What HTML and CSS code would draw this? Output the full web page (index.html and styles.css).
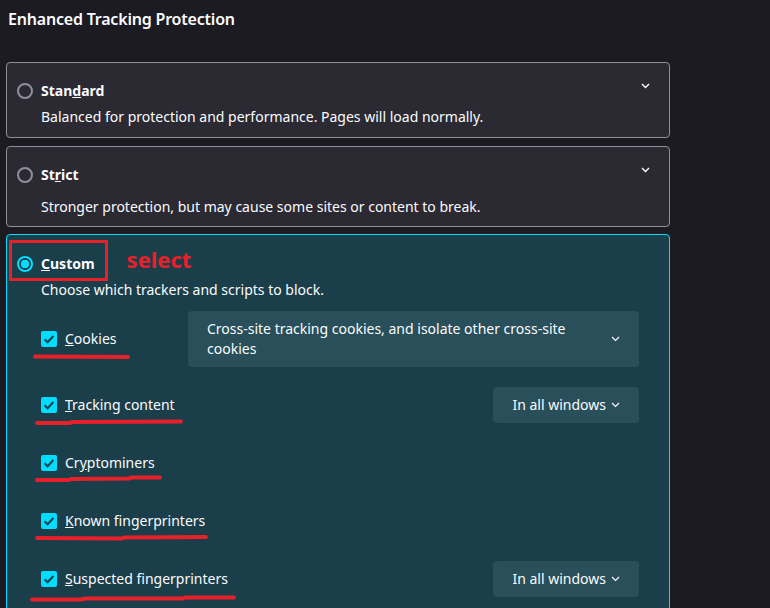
FILE: index.html
```html
<!DOCTYPE html>
<html>
<head>
<meta charset="utf-8">
<link rel="stylesheet" href="styles.css">
</head>
<body>
<h1 class="title">Enhanced Tracking Protection</h1>
<div class="options">
  <section class="card">
    <div class="head">
      <span class="radio"></span>
      <span class="label">Stan<u>d</u>ard</span>
      <svg class="chev" width="9" height="6" viewBox="0 0 9 6"><path d="M1 1l3.5 3.5L8 1" fill="none" stroke="#fbfbfe" stroke-width="1.4"/></svg>
    </div>
    <p class="desc">Balanced for protection and performance. Pages will load normally.</p>
  </section>
  <section class="card strict">
    <div class="head">
      <span class="radio"></span>
      <span class="label">St<u>r</u>ict</span>
      <svg class="chev" width="9" height="6" viewBox="0 0 9 6"><path d="M1 1l3.5 3.5L8 1" fill="none" stroke="#fbfbfe" stroke-width="1.4"/></svg>
    </div>
    <p class="desc">Stronger protection, but may cause some sites or content to break.</p>
  </section>
  <section class="card custom">
    <div class="head">
      <span class="radio on"></span>
      <span class="label"><u>C</u>ustom</span>
      <span class="note">select</span>
      <span class="box"></span>
    </div>
    <p class="desc">Choose which trackers and scripts to block.</p>
    <div class="rows">
      <div class="row cookies">
        <span class="check"><svg width="16" height="16" viewBox="0 0 16 16"><path d="M3.6 8.2l3 3 5.8-6.2" fill="none" stroke="#1b3e4b" stroke-width="2"/></svg></span>
        <span class="clabel"><u>C</u>ookies</span>
        <span class="select wide">Cross-site tracking cookies, and isolate other cross-site cookies<svg class="schev" width="9" height="6" viewBox="0 0 9 6"><path d="M1 1l3.5 3.5L8 1" fill="none" stroke="#fbfbfe" stroke-width="1.2"/></svg></span>
      </div>
      <div class="row">
        <span class="check"><svg width="16" height="16" viewBox="0 0 16 16"><path d="M3.6 8.2l3 3 5.8-6.2" fill="none" stroke="#1b3e4b" stroke-width="2"/></svg></span>
        <span class="clabel"><u>T</u>racking content</span>
        <span class="select">In all windows<svg class="schev" width="9" height="6" viewBox="0 0 9 6"><path d="M1 1l3.5 3.5L8 1" fill="none" stroke="#fbfbfe" stroke-width="1.2"/></svg></span>
      </div>
      <div class="row">
        <span class="check"><svg width="16" height="16" viewBox="0 0 16 16"><path d="M3.6 8.2l3 3 5.8-6.2" fill="none" stroke="#1b3e4b" stroke-width="2"/></svg></span>
        <span class="clabel">Cr<u>y</u>ptominers</span>
      </div>
      <div class="row">
        <span class="check"><svg width="16" height="16" viewBox="0 0 16 16"><path d="M3.6 8.2l3 3 5.8-6.2" fill="none" stroke="#1b3e4b" stroke-width="2"/></svg></span>
        <span class="clabel"><u>K</u>nown fingerprinters</span>
      </div>
      <div class="row">
        <span class="check"><svg width="16" height="16" viewBox="0 0 16 16"><path d="M3.6 8.2l3 3 5.8-6.2" fill="none" stroke="#1b3e4b" stroke-width="2"/></svg></span>
        <span class="clabel"><u>S</u>uspected fingerprinters</span>
        <span class="select">In all windows<svg class="schev" width="9" height="6" viewBox="0 0 9 6"><path d="M1 1l3.5 3.5L8 1" fill="none" stroke="#fbfbfe" stroke-width="1.2"/></svg></span>
      </div>
    </div>
  </section>
</div>
<svg class="marks" width="770" height="608" viewBox="0 0 770 608">
  <g fill="none" stroke="#e8202a" stroke-width="3.8" stroke-linecap="round">
    <path d="M35 356.5 L128 357"/>
    <path d="M37 423 L70 423 L72 422 L181 421.5"/>
    <path d="M37 480 L69 480 L71 479 L129 478.5 L131 477.5 L160 477.5"/>
    <path d="M37 538 L122 538.5 L124 537.5 L206 537"/>
    <path d="M32 599.5 L82 599.5 L84 598.5 L183 598.5 L185 597.5 L234 597.5"/>
  </g>
</svg>
</body>
</html>
```
FILE: styles.css
```css
* { box-sizing: border-box; }
html, body { margin: 0; padding: 0; }
body {
  width: 770px;
  height: 608px;
  overflow: hidden;
  background: #1c1b22;
  color: #fbfbfe;
  font-family: "Noto Sans", "Open Sans", sans-serif;
  font-size: 14px;
  position: relative;
}
.title {
  margin: 0;
  padding: 7px 0 0 8px;
  height: 62px;
  font-size: 16px;
  font-weight: 600;
  line-height: 24px;
  letter-spacing: -0.2px;
}
.options {
  margin-left: 6px;
  width: 664px;
  display: flex;
  flex-direction: column;
  gap: 8px;
}
.card {
  background: #2b2a33;
  border: 1px solid #8f8f9d;
  border-radius: 4px;
  padding: 17px 19px 9px 10px;
}
.card.strict { padding-bottom: 8px; margin-bottom: -1px; }
.card.strict .desc { margin-top: 10px; }
.head {
  display: flex;
  align-items: center;
  height: 22px;
  position: relative;
}
.radio {
  width: 16px;
  height: 16px;
  border: 2px solid #8f8f9d;
  border-radius: 50%;
  margin-right: 8px;
  flex: none;
}
.radio.on {
  border-color: #00ddff;
  background: radial-gradient(circle, #00ddff 0 4px, transparent 4.5px);
}
.label {
  font-weight: 700;
  line-height: 22px;
}
.chev {
  margin-left: auto;
  align-self: flex-start;
  margin-top: 3px;
}
.desc {
  margin: 4px 0 0 24px;
  line-height: 22px;
}
.card.custom {
  background: #1a3f4b;
  border-color: #00ddff;
  padding: 18px 30px 20px 10px;
}
.note {
  margin-left: 32px;
  margin-top: -10px;
  color: #e8202a;
  font-weight: 700;
  font-size: 22px;
  line-height: 22px;
}
.box {
  position: absolute;
  left: -8px;
  top: -13px;
  width: 99px;
  height: 41px;
  border: 3px solid #e8202a;
}
.rows {
  margin: 10px 0 0 24px;
  display: flex;
  flex-direction: column;
  gap: 22px;
}
.row {
  display: flex;
  align-items: center;
  min-height: 36px;
}
.row.cookies { margin-bottom: -2px; }
.check {
  width: 16px;
  height: 16px;
  background: #00ddff;
  border-radius: 2px;
  margin-right: 8px;
  display: flex;
  flex: none;
}
.clabel { line-height: 20px; }
.select {
  margin-left: auto;
  background: #284f5a;
  border-radius: 4px;
  display: flex;
  align-items: center;
  height: 36px;
  padding: 0 19px;
  line-height: 20px;
  white-space: nowrap;
}
.select .schev { margin-left: 5px; flex: none; }
.select.wide {
  width: 451px;
  height: 56px;
  white-space: normal;
  padding: 8px 19px;
}
.select.wide .schev { margin-left: auto; }
.marks {
  position: absolute;
  left: 0;
  top: 0;
  pointer-events: none;
}
```
